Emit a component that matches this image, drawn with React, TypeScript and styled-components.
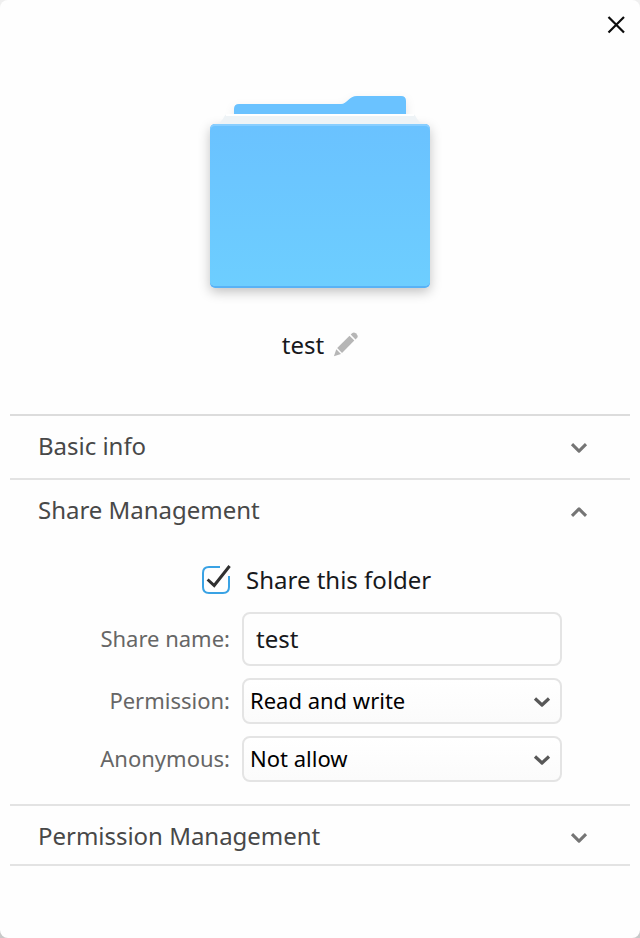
import React, { useState } from "react";
import styled, { createGlobalStyle } from "styled-components";

const GlobalStyle = createGlobalStyle`
  * { box-sizing: border-box; }
  html, body { margin: 0; padding: 0; }
  body {
    background: linear-gradient(#efefef, #c9c9c9);
    font-family: "Noto Sans", sans-serif;
  }
  button, input { font-family: inherit; }
`;

const Dialog = styled.main`
  display: flex;
  flex-direction: column;
  width: 640px;
  height: 938px;
  border-radius: 8px;
  background: #fefefe;
  overflow: hidden;
`;

const TitleBar = styled.header`
  display: flex;
  justify-content: flex-end;
  align-items: flex-start;
  height: 50px;
  padding: 13px 12px 0 0;
`;

const IconButton = styled.button`
  display: block;
  flex: none;
  padding: 0;
  border: 0;
  background: none;
  line-height: 0;
`;

const Preview = styled.section`
  display: flex;
  flex-direction: column;
  align-items: center;
  height: 364px;
  padding-top: 34px;
`;

const NameRow = styled.div`
  display: flex;
  align-items: center;
  gap: 9px;
  height: 34px;
  margin: 4px 0 0 1px;
`;

const FileName = styled.span`
  font-size: 24px;
  line-height: 34px;
  color: #17191c;
`;

const Sections = styled.div`
  margin: 0 10px;
  border-top: 2px solid #dcdcdc;
`;

const Section = styled.section<{ $height: number }>`
  height: ${(p) => p.$height}px;
  border-bottom: 2px solid #e3e3e3;
`;

const SectionHeader = styled.div`
  display: flex;
  align-items: center;
  justify-content: space-between;
  height: 60px;
  padding: 0 42px 0 28px;
`;

const SectionTitle = styled.h2`
  margin: 0;
  font-size: 24px;
  font-weight: 400;
  line-height: 34px;
  letter-spacing: -0.02px;
  color: #484848;
`;

const ShareForm = styled.div`
  display: flex;
  flex-direction: column;
  gap: 12px;
  padding-top: 21px;
`;

const CheckRow = styled.label`
  display: flex;
  align-items: center;
  gap: 14px;
  height: 37px;
  margin-bottom: 2px;
  padding-left: 192px;
  font-size: 24px;
  color: #17191c;
`;

const Field = styled.div`
  display: grid;
  grid-template-columns: 220px 320px;
  column-gap: 12px;
  align-items: center;
`;

const FieldLabel = styled.label`
  padding-bottom: 2px;
  font-size: 22px;
  line-height: 30px;
  color: #666;
  text-align: right;
  white-space: nowrap;
`;

const TextInput = styled.input`
  width: 320px;
  height: 54px;
  padding: 0 12px 2px;
  border: 2px solid #e4e4e4;
  border-radius: 8px;
  outline: none;
  background: #fefefe;
  font-size: 24px;
  color: #17191c;
`;

const Select = styled.button`
  display: flex;
  align-items: center;
  justify-content: space-between;
  width: 320px;
  height: 46px;
  padding: 0 9px 0 6px;
  border: 2px solid #e4e4e4;
  border-radius: 8px;
  background: linear-gradient(#fff, #fbfbfb);
  font-size: 22px;
  line-height: 30px;
  color: #000;
`;

const SelectValue = styled.span`
  padding-bottom: 2px;
`;

const CloseIcon = () => (
  <svg width="24" height="24" viewBox="0 0 24 24" fill="none" stroke="#0c0c0c" strokeWidth="2.2">
    <path d="M4.5 4L20 19.5M20 4L4.5 19.5" />
  </svg>
);

const Chevron = ({ up = false }: { up?: boolean }) => (
  <svg width="18" height="16" viewBox="0 0 18 16" fill="none" stroke="#757575" strokeWidth="3.1">
    <path d={up ? "M2 13.8L9 6.9L16 13.8" : "M2 6.2L9 13.1L16 6.2"} strokeLinejoin="round" />
  </svg>
);

const SelectChevron = () => (
  <svg width="18" height="14" viewBox="0 0 18 14" fill="none" stroke="#585858" strokeWidth="3.2">
    <path d="M2 4.5L9 11L16 4.5" strokeLinejoin="round" />
  </svg>
);

const PencilIcon = () => (
  <svg width="26" height="26" viewBox="0 0 26 26" fill="#b6b6b6">
    <path d="M0.9 24.3L3.3 17.2L8 22.1Z" />
    <path d="M4.2 16.1L16.5 3.8L21.3 8.6L9 20.9Z" />
    <path d="M17.7 2.6L19.3 1Q20.9 -0.2 22.7 1.2L23.9 2.4Q25.4 4.2 24.2 5.7L22.5 7.4Z" />
  </svg>
);

const CheckIcon = ({ checked }: { checked: boolean }) => (
  <svg width="30" height="32" viewBox="0 0 30 32" fill="none">
    <path
      d={
        checked
          ? "M18 3H7Q1 3 1 9V23Q1 29 7 29H21Q27 29 27 23V12"
          : "M7 3H21Q27 3 27 9V23Q27 29 21 29H7Q1 29 1 23V9Q1 3 7 3Z"
      }
      stroke="#39a2e4"
      strokeWidth="2"
    />
    {checked && <path d="M5.6 15.5L12.2 21.5L27.6 2" stroke="#303030" strokeWidth="3" />}
  </svg>
);

const FolderIcon = () => (
  <svg width="260" height="240" viewBox="190 84 260 240">
    <defs>
      <linearGradient id="folder-front" x1="0" y1="0" x2="0" y2="1">
        <stop offset="0" stopColor="#6ac2ff" />
        <stop offset="1" stopColor="#6dceff" />
      </linearGradient>
      <filter id="folder-shadow" x="-20%" y="-20%" width="140%" height="150%">
        <feDropShadow dx="0" dy="4" stdDeviation="6" floodColor="#000" floodOpacity="0.24" />
      </filter>
      <filter id="tab-shadow" x="-20%" y="-100%" width="140%" height="300%">
        <feDropShadow dx="0" dy="4" stdDeviation="5" floodColor="#000" floodOpacity="0.1" />
      </filter>
      <clipPath id="above-front">
        <rect x="190" y="84" width="260" height="50" />
      </clipPath>
    </defs>
    <g clipPath="url(#above-front)">
      <path
        d="M234 130V109Q234 104 239 104H341C347 104 349 96 357 96H401Q406 96 406 101V130Z"
        fill="#6ac2ff"
        filter="url(#tab-shadow)"
      />
    </g>
    <rect x="210" y="124" width="220" height="164" rx="5" fill="#58b2f6" filter="url(#folder-shadow)" />
    <path d="M214 126Q222 122 224 117Q225 114 229 114H411Q415 114 416 117Q418 122 426 126Z" fill="#eef3f6" />
    <path d="M226 115H414" stroke="#fff" strokeWidth="2" />
    <rect x="210" y="124" width="220" height="162" rx="5" fill="#88ceff" />
    <rect x="210" y="126" width="220" height="160" rx="5" fill="url(#folder-front)" />
  </svg>
);

export default function App() {
  const [shared, setShared] = useState(true);
  const [shareName, setShareName] = useState("test");

  return (
    <>
      <GlobalStyle />
      <Dialog>
        <TitleBar>
          <IconButton aria-label="Close">
            <CloseIcon />
          </IconButton>
        </TitleBar>
        <Preview>
          <FolderIcon />
          <NameRow>
            <FileName>test</FileName>
            <IconButton aria-label="Rename">
              <PencilIcon />
            </IconButton>
          </NameRow>
        </Preview>
        <Sections>
          <Section $height={64}>
            <SectionHeader>
              <SectionTitle>Basic info</SectionTitle>
              <Chevron />
            </SectionHeader>
          </Section>
          <Section $height={326}>
            <SectionHeader>
              <SectionTitle>Share Management</SectionTitle>
              <Chevron up />
            </SectionHeader>
            <ShareForm>
              <CheckRow onClick={() => setShared(!shared)}>
                <CheckIcon checked={shared} />
                <span>Share this folder</span>
              </CheckRow>
              <Field>
                <FieldLabel htmlFor="share-name">Share name:</FieldLabel>
                <TextInput id="share-name" value={shareName} onChange={(e) => setShareName(e.target.value)} />
              </Field>
              <Field>
                <FieldLabel>Permission:</FieldLabel>
                <Select>
                  <SelectValue>Read and write</SelectValue>
                  <SelectChevron />
                </Select>
              </Field>
              <Field>
                <FieldLabel>Anonymous:</FieldLabel>
                <Select>
                  <SelectValue>Not allow</SelectValue>
                  <SelectChevron />
                </Select>
              </Field>
            </ShareForm>
          </Section>
          <Section $height={60}>
            <SectionHeader>
              <SectionTitle>Permission Management</SectionTitle>
              <Chevron />
            </SectionHeader>
          </Section>
        </Sections>
      </Dialog>
    </>
  );
}
